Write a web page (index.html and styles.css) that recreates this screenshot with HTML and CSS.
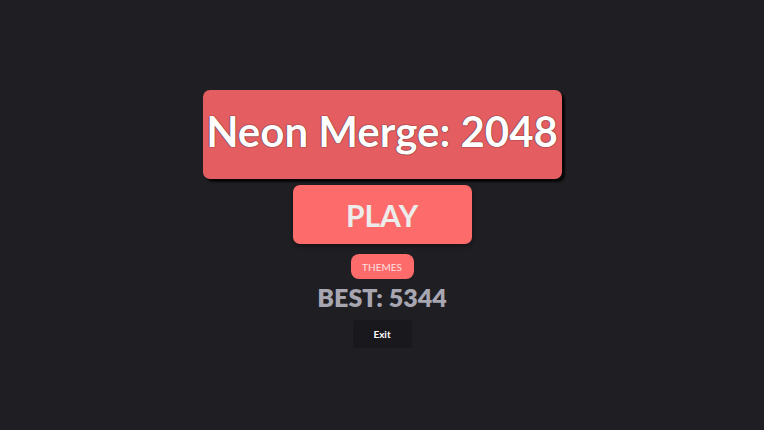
FILE: index.html
```html
<!DOCTYPE html>
<html lang="en">
<head>
    <meta charset="UTF-8">
    <meta name="viewport" content="width=device-width, initial-scale=1.0">
    <title>Neon Merge: 2048</title>
    <link rel="stylesheet" href="styles.css">
</head>
<body>

    <div class="menu">
        <h1 class="title">Neon Merge: 2048</h1>
        <button class="play-btn">PLAY</button>
        <button class="themes-btn">THEMES</button>
        <p class="best">BEST: 5344</p>
        <button class="exit-btn">Exit</button>
    </div>

</body>
</html>
```

FILE: styles.css
```css
body {
    font-family: 'Lato', 'Noto Sans', sans-serif;
    margin: 0;
    height: 100vh;
    background-color: #1f1e23;
    display: flex;
    justify-content: center;
    align-items: flex-start;
}

.menu {
    display: flex;
    flex-direction: column;
    align-items: center;
    padding-top: 90px;
}

.title {
    margin: 0;
    width: 359px;
    height: 89px;
    box-sizing: border-box;
    padding-bottom: 8px;
    display: flex;
    align-items: center;
    justify-content: center;
    background-color: #e35d61;
    border-radius: 7px;
    box-shadow: 3px 3px 2px rgba(0, 0, 0, 0.8);
    color: white;
    font-size: 42px;
    font-weight: 700;
    white-space: nowrap;
    text-shadow: 0 0 1px #4a2224, 0 0 1px #4a2224;
}

button {
    font-family: inherit;
    border: none;
    cursor: pointer;
}

.play-btn {
    margin-top: 6px;
    width: 179px;
    height: 59px;
    background-color: #fe6b6b;
    border-radius: 7px;
    color: #ececec;
    font-size: 30px;
    font-weight: 700;
    box-shadow: 0 2px 4px rgba(0, 0, 0, 0.4);
}

.themes-btn {
    margin-top: 10px;
    width: 63px;
    height: 25px;
    padding: 0;
    background-color: #fe6b6b;
    border-radius: 8px;
    color: #fde0e0;
    font-size: 10px;
}

.best {
    margin: 3px 0 0;
    color: #a7a6b1;
    font-size: 25px;
    font-weight: 800;
}

.exit-btn {
    margin-top: 8px;
    width: 59px;
    height: 28px;
    background-color: #19181c;
    border-radius: 2px;
    color: white;
    font-size: 10px;
    font-weight: 700;
}
```
